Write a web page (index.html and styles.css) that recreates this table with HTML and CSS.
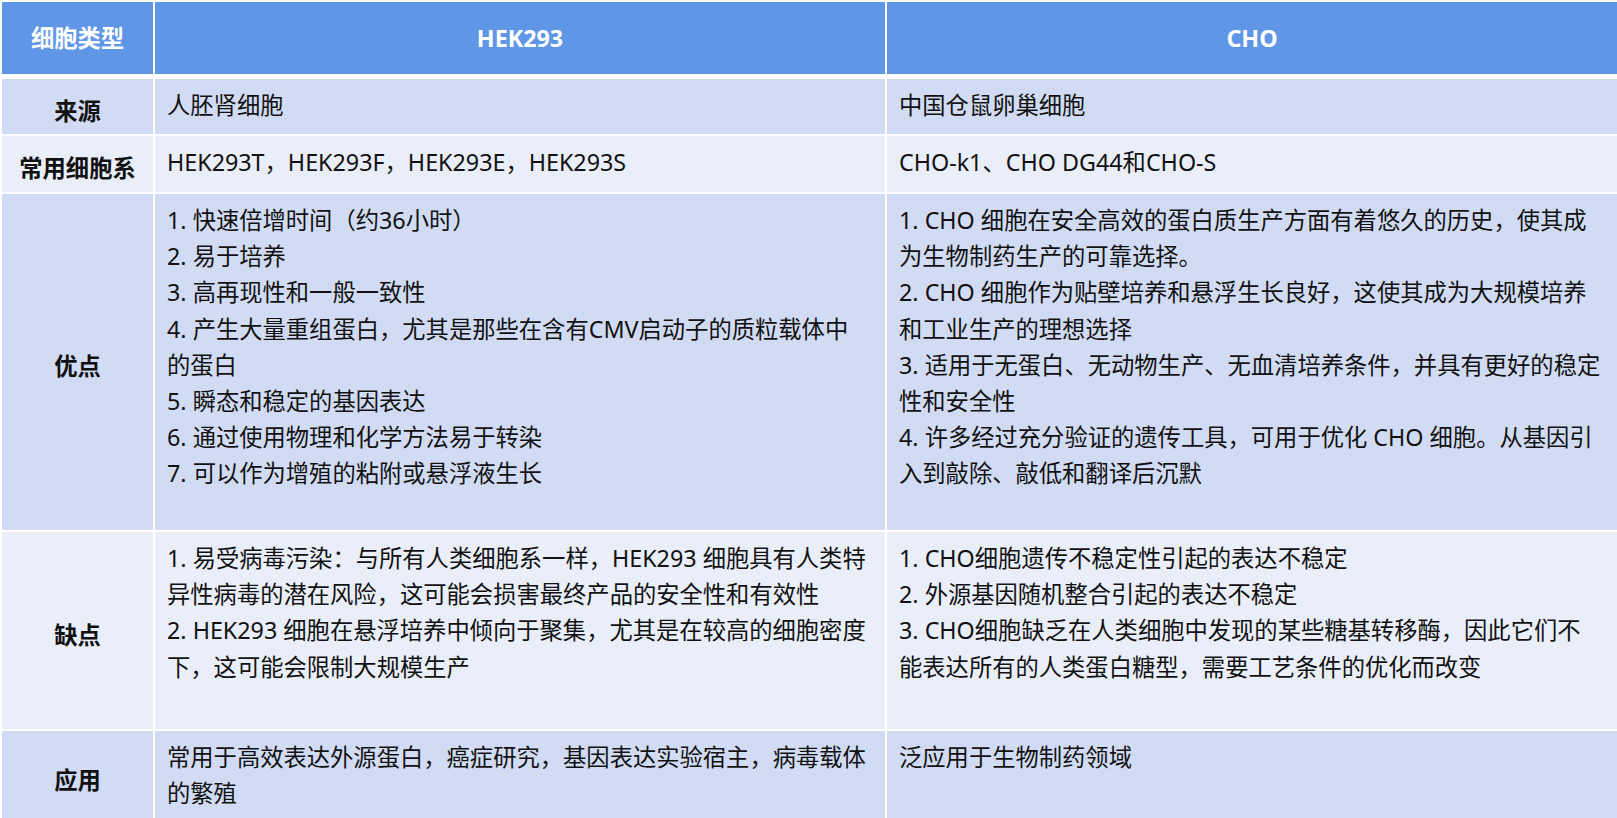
FILE: index.html
```html
<!DOCTYPE html>
<html lang="zh-CN">
<head>
<meta charset="utf-8">
<title>细胞类型对比</title>
<link rel="stylesheet" href="styles.css">
</head>
<body>
<table class="cmp">
  <colgroup>
    <col class="c-label">
    <col class="c-data">
    <col class="c-data">
  </colgroup>
  <thead>
    <tr class="r-head">
      <th>细胞类型</th>
      <th>HEK293</th>
      <th>CHO</th>
    </tr>
  </thead>
  <tbody>
    <tr class="band1 r-src">
      <td class="label">来源</td>
      <td class="txt">人胚肾细胞</td>
      <td class="txt">中国仓鼠卵巢细胞</td>
    </tr>
    <tr class="band2 r-line">
      <td class="label">常用细胞系</td>
      <td class="txt">HEK293T，HEK293F，HEK293E，HEK293S</td>
      <td class="txt">CHO-k1、CHO DG44和CHO-S</td>
    </tr>
    <tr class="band1 r-pro">
      <td class="label">优点</td>
      <td class="txt">1. 快速倍增时间（约36小时）<br>2. 易于培养<br>3. 高再现性和一般一致性<br>4. 产生大量重组蛋白，尤其是那些在含有CMV启动子的质粒载体中<br>的蛋白<br>5. 瞬态和稳定的基因表达<br>6. 通过使用物理和化学方法易于转染<br>7. 可以作为增殖的粘附或悬浮液生长</td>
      <td class="txt">1. CHO 细胞在安全高效的蛋白质生产方面有着悠久的历史，使其成<br>为生物制药生产的可靠选择。<br>2. CHO 细胞作为贴壁培养和悬浮生长良好，这使其成为大规模培养<br>和工业生产的理想选择<br>3. 适用于无蛋白、无动物生产、无血清培养条件，并具有更好的稳定<br>性和安全性<br>4. 许多经过充分验证的遗传工具，可用于优化 CHO 细胞。从基因引<br>入到敲除、敲低和翻译后沉默</td>
    </tr>
    <tr class="band2 r-con">
      <td class="label">缺点</td>
      <td class="txt">1. 易受病毒污染：与所有人类细胞系一样，HEK293 细胞具有人类特<br>异性病毒的潜在风险，这可能会损害最终产品的安全性和有效性<br>2. HEK293 细胞在悬浮培养中倾向于聚集，尤其是在较高的细胞密度<br>下，这可能会限制大规模生产</td>
      <td class="txt">1. CHO细胞遗传不稳定性引起的表达不稳定<br>2. 外源基因随机整合引起的表达不稳定<br>3. CHO细胞缺乏在人类细胞中发现的某些糖基转移酶，因此它们不<br>能表达所有的人类蛋白糖型，需要工艺条件的优化而改变</td>
    </tr>
    <tr class="band1 r-app">
      <td class="label">应用</td>
      <td class="txt">常用于高效表达外源蛋白，癌症研究，基因表达实验宿主，病毒载体<br>的繁殖</td>
      <td class="txt">泛应用于生物制药领域</td>
    </tr>
  </tbody>
</table>
</body>
</html>
```

FILE: styles.css
```css
html, body {
  margin: 0;
  padding: 0;
  background: #ffffff;
  overflow: hidden;
}

body {
  font-family: "Noto Sans", "Noto Sans CJK SC", sans-serif;
  font-size: 23.3px;
  color: #111111;
}

.cmp {
  border-collapse: separate;
  border-spacing: 2px;
  table-layout: fixed;
  width: 1619px;
}

.c-label { width: 151px; }
.c-data { width: 730px; }

.cmp th,
.cmp td {
  padding: 0;
  background-clip: padding-box;
}

.r-head th {
  height: 72px;
  background-color: #6096e6;
  color: #ffffff;
  font-weight: 700;
  text-align: center;
  vertical-align: middle;
  border-bottom: 3px solid #ffffff;
  line-height: 36px;
}

.band1 td { background-color: #d1dcf4; }
.band2 td { background-color: #e9eef9; }

.label {
  text-align: center;
  vertical-align: middle;
  font-weight: 700;
  line-height: 36px;
  padding-top: 8px !important;
}

.txt {
  vertical-align: top;
  text-align: left;
  white-space: nowrap;
  line-height: 36.2px;
  padding: 8px 12px 0 12px !important;
}

.r-src td { height: 55px; box-sizing: border-box; }
.r-line td { height: 56px; box-sizing: border-box; }
.r-pro td { height: 336px; box-sizing: border-box; }
.r-con td { height: 197px; box-sizing: border-box; }
.r-app td { height: 90px; box-sizing: border-box; }
```
